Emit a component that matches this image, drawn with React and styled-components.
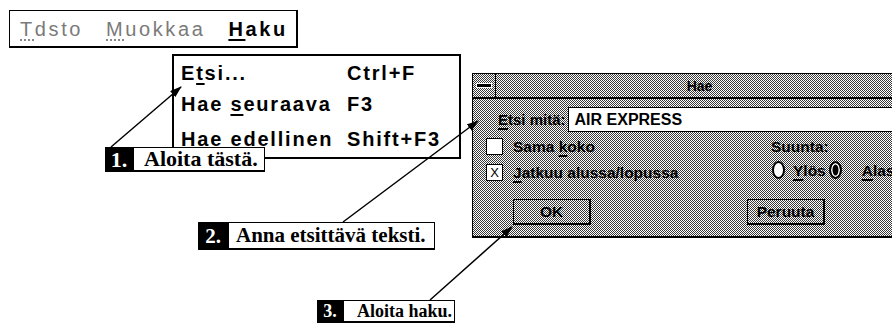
import React from "react";
import styled, { createGlobalStyle } from "styled-components";

// 1px checker, the old monochrome 50% grey
const dither = "repeating-conic-gradient(#3a3a3a 0 25%, #fff 0 50%) 0 0 / 2px 2px";

const GlobalStyle = createGlobalStyle`
  html, body {
    margin: 0;
    padding: 0;
    background: #fff;
  }
`;

const Canvas = styled.div`
  position: relative;
  width: 892px;
  height: 331px;
  overflow: hidden;
  background: #fff;
  font-family: "Liberation Sans", Arial, sans-serif;
  color: #000;
`;

/* ---------- menubar ---------- */
const MenuBar = styled.div`
  position: absolute;
  left: 9px;
  top: 10px;
  width: 289px;
  height: 38px;
  box-sizing: border-box;
  border: 1px solid #000;
  border-right-width: 2px;
  border-bottom-width: 2px;
  display: flex;
  align-items: center;
  gap: 23px;
  padding: 2px 0 0 10px;
  font-size: 20px;
  letter-spacing: 2.6px;
`;

const BarItem = styled.span`
  font-weight: ${p => (p.$active ? 700 : 400)};
  color: ${p => (p.$disabled ? "#7a7a7a" : "#000")};
`;

const Key = styled.span`
  text-decoration: underline;
  text-decoration-thickness: 2px;
  text-underline-offset: 3px;
  text-decoration-color: ${p => (p.$faint ? "#888" : "#000")};
  text-decoration-style: ${p => (p.$faint ? "dotted" : "solid")};
`;

/* ---------- dropdown ---------- */
const DropMenu = styled.div`
  position: absolute;
  left: 172px;
  top: 54px;
  width: 289px;
  height: 105px;
  box-sizing: border-box;
  border: 2px solid #000;
  padding: 2px 0 0 7px;
  font-size: 20px;
  font-weight: 700;
  letter-spacing: 1.8px;
`;

const MenuRow = styled.div`
  display: grid;
  grid-template-columns: 166px auto;
  line-height: 31px;
  white-space: nowrap;
  margin-top: ${p => p.$extra || 0}px;
`;

/* ---------- dialog ---------- */
const Dialog = styled.div`
  position: absolute;
  left: 472px;
  top: 73px;
  width: 432px;
  height: 165px;
  box-sizing: border-box;
  border: 1px solid #000;
  border-bottom-width: 2px;
  background: ${dither};
  display: flex;
  flex-direction: column;
  font-size: 15.5px;
  font-weight: 700;
`;

const TitleBar = styled.div`
  height: 23px;
  flex: none;
  display: flex;
  align-items: stretch;
  border-bottom: 2px solid #000;
`;

const SysBox = styled.div`
  width: 22px;
  border-right: 1px solid #000;
  display: flex;
  align-items: center;
  justify-content: center;
`;

const SysDash = styled.div`
  width: 14px;
  height: 3px;
  background: #000;
  outline: 1px solid #fff;
`;

const Title = styled.div`
  flex: 1;
  display: flex;
  align-items: center;
  justify-content: center;
  font-size: 14px;
`;

const Body = styled.div`
  padding: 8px 0 0 13px;
  display: flex;
  flex-direction: column;
`;

const Label = styled.span`
  line-height: 17px;
  white-space: nowrap;
  margin-left: ${p => p.$ml || 0}px;
  font-size: ${p => (p.$fs ? `${p.$fs}px` : "inherit")};
`;

const FindRow = styled.div`
  display: flex;
  align-items: center;
  height: 25px;
  padding-left: 12px;
`;

const FindInput = styled.div`
  flex: 1;
  height: 25px;
  box-sizing: border-box;
  margin-left: 2px;
  background: #fff;
  border: 1px solid #000;
  border-right: none;
  display: flex;
  align-items: center;
  padding-left: 6px;
  font-size: 16px;
`;

const Options = styled.div`
  display: flex;
  margin-top: 6px;
`;

const Column = styled.div`
  display: flex;
  flex-direction: column;
  gap: ${p => p.$gap || 0}px;
  width: ${p => (p.$w ? `${p.$w}px` : "auto")};
`;

const CheckRow = styled.div`
  display: flex;
  align-items: center;
  height: 17px;
`;

const Check = styled.div`
  width: 17px;
  height: 17px;
  box-sizing: border-box;
  border: 1.5px solid #000;
  background: #fff;
  display: flex;
  align-items: center;
  justify-content: center;
  font-size: 13px;
  font-weight: 400;
  margin-right: 10px;
`;

const RadioRow = styled.div`
  display: flex;
  align-items: center;
  height: 18px;
  margin-top: 6px;
`;

const Radio = styled.div`
  width: 13px;
  height: 18px;
  box-sizing: border-box;
  border: 2px solid #000;
  border-radius: 50%;
  background: ${p => (p.$on ? "#000" : "#fff")};
  box-shadow: ${p => (p.$on ? "inset 0 0 0 1.5px #fff" : "none")};
  margin-left: ${p => p.$ml || 0}px;
`;

const ButtonRow = styled.div`
  display: flex;
  margin-top: 18px;
  padding-left: 27px;
  gap: 156px;
`;

const Button = styled.div`
  width: 78px;
  height: 26px;
  box-sizing: border-box;
  border: 1px solid #000;
  border-right-width: 2px;
  border-bottom-width: 2px;
  display: flex;
  align-items: center;
  justify-content: center;
`;

/* ---------- callouts ---------- */
const Callout = styled.div`
  position: absolute;
  left: ${p => p.$x}px;
  top: ${p => p.$y}px;
  height: ${p => p.$h}px;
  display: flex;
  font-family: "Liberation Serif", "Times New Roman", serif;
  font-weight: 700;
  font-size: ${p => p.$fs}px;
`;

const Num = styled.div`
  width: ${p => p.$w}px;
  background: #000;
  color: #fff;
  display: flex;
  align-items: center;
  justify-content: center;
`;

const Note = styled.div`
  width: ${p => p.$w}px;
  box-sizing: border-box;
  background: #fff;
  border: 1.5px solid #000;
  border-bottom-width: 2px;
  display: flex;
  align-items: center;
  padding-left: ${p => p.$pl}px;
  white-space: nowrap;
`;

const Arrows = styled.svg`
  position: absolute;
  left: 0;
  top: 0;
  pointer-events: none;
`;

const arrows = [
  [111, 147, 181, 87],
  [343, 222, 478, 121],
  [430, 300, 512, 227],
];

export default function App() {
  return (
    <Canvas>
      <GlobalStyle />

      <MenuBar>
        <BarItem $disabled>
          <Key $faint>T</Key>dsto
        </BarItem>
        <BarItem $disabled>
          <Key $faint>M</Key>uokkaa
        </BarItem>
        <BarItem $active>
          <Key>H</Key>aku
        </BarItem>
      </MenuBar>

      <DropMenu>
        <MenuRow>
          <span>
            E<Key>t</Key>si...
          </span>
          <span>Ctrl+F</span>
        </MenuRow>
        <MenuRow>
          <span>
            Hae <Key>s</Key>euraava
          </span>
          <span>F3</span>
        </MenuRow>
        <MenuRow $extra={4}>
          <span>
            Hae <Key>e</Key>dellinen
          </span>
          <span>Shift+F3</span>
        </MenuRow>
      </DropMenu>

      <Dialog>
        <TitleBar>
          <SysBox>
            <SysDash />
          </SysBox>
          <Title>Hae</Title>
        </TitleBar>
        <Body>
          <FindRow>
            <Label $fs={15}>
              <Key>E</Key>tsi mitä:
            </Label>
            <FindInput>AIR EXPRESS</FindInput>
          </FindRow>
          <Options>
            <Column $w={285} $gap={9}>
              <CheckRow>
                <Check />
                <Label>
                  Sama <Key>k</Key>oko
                </Label>
              </CheckRow>
              <CheckRow>
                <Check>X</Check>
                <Label>
                  <Key>J</Key>atkuu alussa/lopussa
                </Label>
              </CheckRow>
            </Column>
            <Column>
              <Label>Suunta:</Label>
              <RadioRow>
                <Radio $ml={1} />
                <Label $ml={8}>
                  <Key>Y</Key>lös
                </Label>
                <Radio $on $ml={3} />
                <Label $ml={20}>
                  <Key>A</Key>las
                </Label>
              </RadioRow>
            </Column>
          </Options>
          <ButtonRow>
            <Button>OK</Button>
            <Button>Peruuta</Button>
          </ButtonRow>
        </Body>
      </Dialog>

      <Callout $x={105} $y={147} $h={25} $fs={22}>
        <Num $w={28}>1.</Num>
        <Note $w={132} $pl={10}>Aloita tästä.</Note>
      </Callout>
      <Callout $x={198} $y={222} $h={28} $fs={21}>
        <Num $w={30}>2.</Num>
        <Note $w={207} $pl={7}>Anna etsittävä teksti.</Note>
      </Callout>
      <Callout $x={317} $y={300} $h={23} $fs={18}>
        <Num $w={26}>3.</Num>
        <Note $w={112} $pl={13}>Aloita haku.</Note>
      </Callout>

      <Arrows width="892" height="331" viewBox="0 0 892 331">
        <defs>
          <marker
            id="head"
            viewBox="0 0 12 8"
            refX="11"
            refY="4"
            markerWidth="12"
            markerHeight="8"
            markerUnits="userSpaceOnUse"
            orient="auto"
          >
            <path d="M0 0 L12 4 L0 8 Z" fill="#000" />
          </marker>
        </defs>
        {arrows.map(([x1, y1, x2, y2], i) => (
          <line
            key={i}
            x1={x1}
            y1={y1}
            x2={x2}
            y2={y2}
            stroke="#000"
            strokeWidth="1.5"
            markerEnd="url(#head)"
          />
        ))}
      </Arrows>
    </Canvas>
  );
}
